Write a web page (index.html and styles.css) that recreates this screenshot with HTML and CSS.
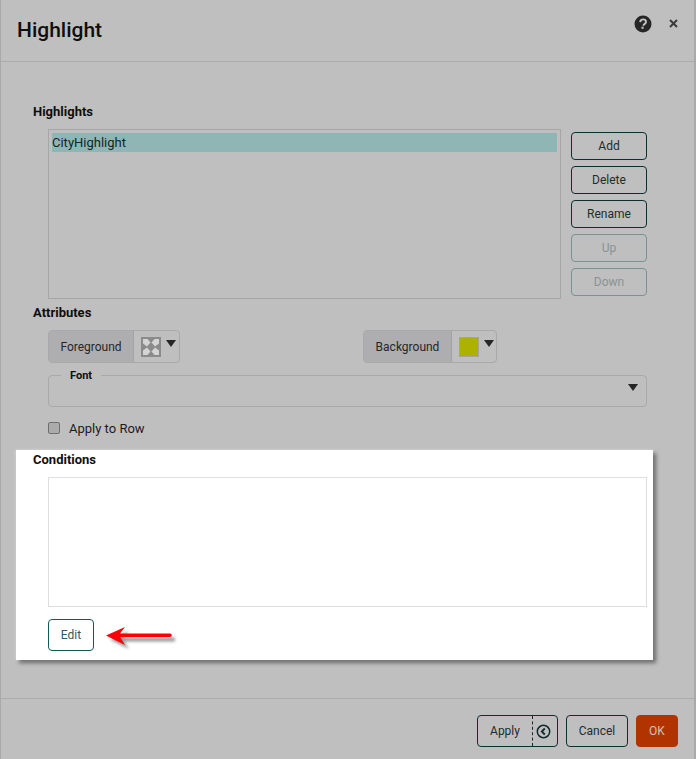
FILE: index.html
```html
<!DOCTYPE html>
<html lang="en">
<head>
<meta charset="utf-8">
<title>Highlight</title>
<link rel="stylesheet" href="styles.css">
</head>
<body>
<div class="dialog">
  <header class="head">
    <h1 class="title">Highlight</h1>
    <div class="head-icons">
      <svg class="help" width="18" height="18" viewBox="0 0 18 18"><circle cx="9" cy="9" r="8.500" fill="#262626"/><path d="M6.200 7.100C6.300 5.300 7.500 4.400 9.100 4.400c1.700 0 2.900 1 2.900 2.400 0 1.200-.7 1.800-1.500 2.300-.7.500-1 .8-1 1.700" fill="none" stroke="#c4c4c4" stroke-width="1.900"/><rect x="7.500" y="11.700" width="2.100" height="2.100" fill="#c4c4c4"/></svg>
      <svg class="close" width="9" height="9" viewBox="0 0 9 9"><path d="M1 1l7 7M8 1L1 8" stroke="#3c3c3c" stroke-width="2"/></svg>
    </div>
  </header>
  <main class="body">
    <div class="label lbl-highlights">Highlights</div>
    <div class="list-row">
      <div class="list"><div class="list-item">CityHighlight</div></div>
      <div class="side">
        <button class="btn side-btn">Add</button>
        <button class="btn side-btn">Delete</button>
        <button class="btn side-btn">Rename</button>
        <button class="btn side-btn off">Up</button>
        <button class="btn side-btn off">Down</button>
      </div>
    </div>
    <div class="label lbl-attr">Attributes</div>
    <div class="colors">
      <div class="picker">
        <span class="picker-name">Foreground</span>
        <span class="picker-val">
          <svg class="swatch" width="20" height="20" viewBox="0 0 20 20"><rect width="20" height="20" fill="#8b8b8b"/><path d="M2 2h4.500l3 3.500L6 9.500 2 6.500zM18 2h-4.500l-3 3.500L14 9.500l4-3zM2 18h4.500l3-3.500L6 10.500l-4 3zM18 18h-4.500l-3-3.500 3.500-4 4 3z" fill="#d4d4d4"/></svg>
          <i class="caret"></i>
        </span>
      </div>
      <div class="picker picker-bg">
        <span class="picker-name">Background</span>
        <span class="picker-val">
          <span class="swatch swatch-olive"></span>
          <i class="caret"></i>
        </span>
      </div>
    </div>
    <div class="font-field">
      <span class="font-legend">Font</span>
      <i class="caret"></i>
    </div>
    <label class="check"><span class="box"></span>Apply to Row</label>
    <section class="panel">
      <div class="label lbl-cond">Conditions</div>
      <div class="cond-box"></div>
      <button class="btn edit">Edit</button>
      <svg class="arrow" width="76" height="36" viewBox="0 0 76 36">
        <defs><filter id="blur" x="-20%" y="-40%" width="140%" height="180%"><feGaussianBlur stdDeviation="1.500"/></filter></defs>
        <path d="M1 11.500L20 3l-5 6.500H66v4H15L20 21z" transform="translate(4 4)" fill="#000" opacity=".4" filter="url(#blur)"/>
        <path d="M1 11.500L20 3l-5 6.500H65a1.800 1.800 0 0 1 0 3.600H15L20 21z" fill="#fb0007"/>
      </svg>
    </section>
  </main>
  <footer class="foot">
    <div class="btn split">
      <span class="split-main">Apply</span>
      <span class="split-icon"><svg width="15" height="15" viewBox="0 0 15 15"><circle cx="7.500" cy="7.500" r="6.200" fill="none" stroke="#10292a" stroke-width="1.500"/><path d="M8.800 4.500L5.800 7.500l3 3" fill="none" stroke="#10292a" stroke-width="1.800"/></svg></span>
    </div>
    <button class="btn cancel">Cancel</button>
    <button class="btn ok">OK</button>
  </footer>
</div>
</body>
</html>
```
FILE: styles.css
```css
* { box-sizing: border-box; }
html, body { margin: 0; padding: 0; }
body {
  width: 696px;
  height: 759px;
  overflow: hidden;
  background: #bfbfbf;
  font-family: Roboto, "Liberation Sans", sans-serif;
  color: #1c1c1c;
}
.dialog {
  width: 696px;
  height: 759px;
  border-left: 1px solid #a9a9a9;
  border-right: 2px solid #a9a9a9;
  display: flex;
  flex-direction: column;
}
.head {
  height: 62px;
  flex: none;
  border-bottom: 1px solid #acacac;
  padding-left: 16px;
  display: flex;
  justify-content: space-between;
}
.title {
  margin: 16px 0 0;
  font-size: 21px;
  line-height: 28px;
  font-weight: 500;
  color: #0e0e0e;
}
.head-icons {
  display: flex;
  align-items: flex-start;
  gap: 17px;
  padding: 15px 16px 0 0;
}
.help { display: block; }
.close { display: block; margin-top: 4px; }
.body {
  flex: 1;
  padding-top: 42px;
}
.label {
  font-size: 13px;
  line-height: 16px;
  font-weight: 700;
  color: #0e0e0e;
  margin-left: 32px;
}
.list-row {
  display: flex;
  margin: 9px 0 0 47px;
}
.list {
  width: 513px;
  height: 170px;
  border: 1px solid #a6a6a6;
  padding: 3px;
}
.list-item {
  height: 19px;
  background: #8fb5b5;
  font-size: 13px;
  line-height: 19px;
  color: #10282a;
}
.side {
  display: flex;
  flex-direction: column;
  gap: 6px;
  margin: 3px 0 0 10px;
}
.btn {
  font-family: inherit;
  font-size: 12px;
  background: transparent;
  border: 1px solid #0e2f2f;
  border-radius: 4px;
  color: #1c2e2e;
  padding: 0;
}
.side-btn { width: 76px; height: 28px; }
.side-btn.off {
  border-color: #7a9391;
  color: #8a9292;
}
.lbl-attr { margin-top: 6px; }
.colors {
  display: flex;
  margin: 9px 0 0 47px;
}
.picker {
  width: 132px;
  height: 33px;
  display: flex;
  border: 1px solid #a9a9a9;
  border-radius: 4px;
  overflow: hidden;
  font-size: 12px;
}
.picker-bg {
  width: 134px;
  margin-left: 183px;
}
.picker-name {
  width: 85px;
  background: #aeaeb0;
  border-right: 1px solid #a3a3a3;
  display: flex;
  align-items: center;
  justify-content: center;
  color: #262628;
}
.picker-bg .picker-name { width: 88px; }
.picker-val {
  flex: 1;
  display: flex;
  align-items: flex-start;
  padding: 6px 0 0 7px;
  gap: 5px;
}
.swatch { display: block; width: 20px; height: 20px; flex: none; }
.swatch-olive { background: #adb100; border: 1px solid #a3a3a3; }
.caret {
  display: block;
  width: 0;
  height: 0;
  border-left: 5px solid transparent;
  border-right: 5px solid transparent;
  border-top: 7px solid #262626;
  margin-top: 3px;
}
.font-field {
  position: relative;
  height: 32px;
  margin: 12px 47px 0 47px;
  border: 1px solid #a9a9a9;
  border-radius: 4px;
  display: flex;
  justify-content: flex-end;
  align-items: flex-start;
  padding: 5px 8px 0 0;
}
.font-legend {
  position: absolute;
  left: 12px;
  top: -7px;
  padding: 0 9px;
  background: #bfbfbf;
  font-size: 11px;
  line-height: 13px;
  font-weight: 700;
  color: #0e0e0e;
}
.check {
  display: flex;
  align-items: center;
  margin: 13px 0 0 47px;
  height: 16px;
  font-size: 13px;
  color: #1c1c1c;
}
.box {
  width: 12px;
  height: 12px;
  margin-right: 9px;
  background: #ababab;
  border: 1px solid #6f6f6f;
  border-radius: 2px;
}
.panel {
  position: relative;
  width: 637px;
  height: 210px;
  margin: 14px 0 0 15px;
  background: #fff;
  box-shadow: 3px 3px 4px rgba(0, 0, 0, .45), 0 0 3px rgba(255, 255, 255, .5);
  padding-top: 2px;
}
.panel .label { margin-left: 17px; }
.cond-box {
  height: 130px;
  margin: 9px 6px 0 32px;
  border: 1px solid #dedede;
}
.edit {
  display: block;
  width: 46px;
  height: 32px;
  margin: 12px 0 0 32px;
  border-color: #125c58;
  color: #2f5a5e;
}
.arrow {
  position: absolute;
  left: 89px;
  top: 174px;
}
.foot {
  flex: none;
  height: 61px;
  border-top: 1px solid #acacac;
  padding: 16px 16px 0 0;
  display: flex;
  justify-content: flex-end;
  gap: 8px;
}
.foot .btn { height: 32px; }
.split {
  width: 81px;
  display: flex;
}
.split-main {
  width: 55px;
  border-right: 1px dashed #10292a;
  display: flex;
  align-items: center;
  justify-content: center;
}
.split-icon {
  flex: 1;
  display: flex;
  align-items: center;
  justify-content: center;
  padding-right: 3px;
}
.cancel { width: 62px; }
.foot .ok {
  width: 42px;
  background: #b13400;
  border-color: #b13400;
  color: #d2c0b4;
  font-weight: 400;
}
```
